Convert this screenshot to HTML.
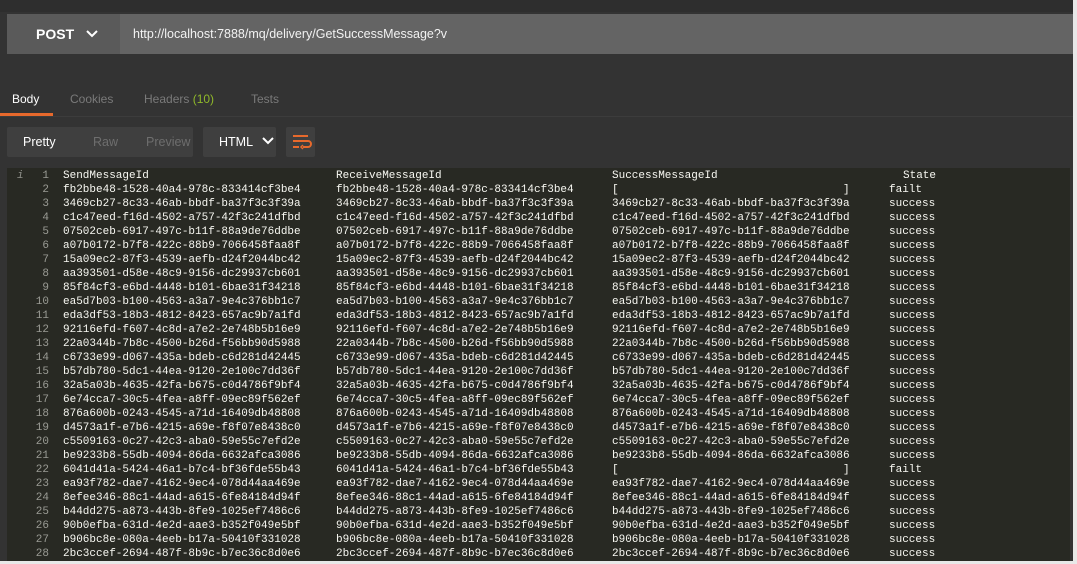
<!DOCTYPE html>
<html><head><meta charset="utf-8"><style>
*{margin:0;padding:0;box-sizing:border-box}
body{width:1077px;height:564px;overflow:hidden;background:#e8e8e8;font-family:"Liberation Sans",sans-serif;position:relative}
#app{position:absolute;left:0;top:0;width:1073px;height:561px;background:#333333}
.top{position:absolute;left:0;top:0;width:1073px;height:12px;background:#2e2e2e}
.bar{position:absolute;left:7px;top:14px;width:1066px;height:40px;background:#646464}
.method{position:absolute;left:7px;top:14px;width:113px;height:40px;background:#5a5a5a;color:#fff;font-weight:bold;font-size:14px;line-height:40px;padding-left:29px}
.url{position:absolute;left:133px;top:14px;line-height:40px;color:#f2f2f2;font-size:12.5px}
.tabs span{position:absolute;top:92px;font-size:12px;color:#7a7a7a}
.ul{position:absolute;left:0;top:113px;width:53px;height:3px;background:#e7692c}
.sep{position:absolute;left:0;top:116px;width:1073px;height:1px;background:#3c3c3c}
.btn{position:absolute;top:127px;height:30px;background:#3f3f3f;border-radius:2px;font-size:12.5px;line-height:30px}
.code{position:absolute;left:7px;top:168px;width:1063px;height:393px;background:#282923}
.r{position:absolute;height:14px;left:0;width:1063px;font-family:"Liberation Mono",monospace;font-size:11px;line-height:14px;color:#f8f8f2;white-space:pre}
.r b{font-weight:normal;position:absolute;top:0}
.r .n{color:#9a9b94;right:1021px;text-align:right}
.c1{left:56px}.c2{left:329px}.c3{left:605px}.c4{left:882px}
</style></head><body><div id="app">
<div class="top"></div>
<div class="bar"></div>
<div class="method">POST <svg width="12" height="8" style="margin-left:8px;vertical-align:1px" viewBox="0 0 12 8"><path d="M1 1l5 5 5-5" stroke="#fff" stroke-width="2" fill="none"/></svg></div>
<div class="url">http://localhost:7888/mq/delivery/GetSuccessMessage?v</div>
<div class="tabs"><span style="left:12px;color:#fff">Body</span><span style="left:70px">Cookies</span><span style="left:144px">Headers <i style="font-style:normal;color:#8fb82a">(10)</i></span><span style="left:251px">Tests</span></div>
<div class="ul"></div><div class="sep"></div>
<div class="btn" style="left:7px;width:186px"><span style="position:absolute;left:16px;color:#fff">Pretty</span><span style="position:absolute;left:86px;color:#6e6e6e">Raw</span><span style="position:absolute;left:139px;color:#6e6e6e">Preview</span></div>
<div class="btn" style="left:203px;width:73px;color:#fff;padding-left:16px">HTML <svg width="12" height="8" style="margin-left:6px;vertical-align:1px" viewBox="0 0 12 8"><path d="M1 1l5 5 5-5" stroke="#fff" stroke-width="2" fill="none"/></svg></div>
<div class="btn" style="left:286px;width:29px"><svg width="29" height="30" viewBox="0 0 29 30"><path d="M7 9h15M7 14h15a3 3 0 0 1 0 6h-5M7 20h6" stroke="#e7692c" stroke-width="2" fill="none"/><path d="M17 18l-2 2 2 2" stroke="#e7692c" stroke-width="1.5" fill="none"/></svg></div>
<div class="code">
<div class="r" style="top:1px"><b style="left:10px;color:#8f908a;font-style:italic">i</b><b class="n">1</b><b class="c1">SendMessageId</b><b class="c2">ReceiveMessageId</b><b class="c3">SuccessMessageId</b><b style="left:896px">State</b></div>
<div class="r" style="top:15px"><b class="n">2</b><b class="c1">fb2bbe48-1528-40a4-978c-833414cf3be4</b><b class="c2">fb2bbe48-1528-40a4-978c-833414cf3be4</b><b class="c3">[                                  ]</b><b class="c4">failt</b></div>
<div class="r" style="top:29px"><b class="n">3</b><b class="c1">3469cb27-8c33-46ab-bbdf-ba37f3c3f39a</b><b class="c2">3469cb27-8c33-46ab-bbdf-ba37f3c3f39a</b><b class="c3">3469cb27-8c33-46ab-bbdf-ba37f3c3f39a</b><b class="c4">success</b></div>
<div class="r" style="top:43px"><b class="n">4</b><b class="c1">c1c47eed-f16d-4502-a757-42f3c241dfbd</b><b class="c2">c1c47eed-f16d-4502-a757-42f3c241dfbd</b><b class="c3">c1c47eed-f16d-4502-a757-42f3c241dfbd</b><b class="c4">success</b></div>
<div class="r" style="top:57px"><b class="n">5</b><b class="c1">07502ceb-6917-497c-b11f-88a9de76ddbe</b><b class="c2">07502ceb-6917-497c-b11f-88a9de76ddbe</b><b class="c3">07502ceb-6917-497c-b11f-88a9de76ddbe</b><b class="c4">success</b></div>
<div class="r" style="top:71px"><b class="n">6</b><b class="c1">a07b0172-b7f8-422c-88b9-7066458faa8f</b><b class="c2">a07b0172-b7f8-422c-88b9-7066458faa8f</b><b class="c3">a07b0172-b7f8-422c-88b9-7066458faa8f</b><b class="c4">success</b></div>
<div class="r" style="top:85px"><b class="n">7</b><b class="c1">15a09ec2-87f3-4539-aefb-d24f2044bc42</b><b class="c2">15a09ec2-87f3-4539-aefb-d24f2044bc42</b><b class="c3">15a09ec2-87f3-4539-aefb-d24f2044bc42</b><b class="c4">success</b></div>
<div class="r" style="top:99px"><b class="n">8</b><b class="c1">aa393501-d58e-48c9-9156-dc29937cb601</b><b class="c2">aa393501-d58e-48c9-9156-dc29937cb601</b><b class="c3">aa393501-d58e-48c9-9156-dc29937cb601</b><b class="c4">success</b></div>
<div class="r" style="top:113px"><b class="n">9</b><b class="c1">85f84cf3-e6bd-4448-b101-6bae31f34218</b><b class="c2">85f84cf3-e6bd-4448-b101-6bae31f34218</b><b class="c3">85f84cf3-e6bd-4448-b101-6bae31f34218</b><b class="c4">success</b></div>
<div class="r" style="top:127px"><b class="n">10</b><b class="c1">ea5d7b03-b100-4563-a3a7-9e4c376bb1c7</b><b class="c2">ea5d7b03-b100-4563-a3a7-9e4c376bb1c7</b><b class="c3">ea5d7b03-b100-4563-a3a7-9e4c376bb1c7</b><b class="c4">success</b></div>
<div class="r" style="top:141px"><b class="n">11</b><b class="c1">eda3df53-18b3-4812-8423-657ac9b7a1fd</b><b class="c2">eda3df53-18b3-4812-8423-657ac9b7a1fd</b><b class="c3">eda3df53-18b3-4812-8423-657ac9b7a1fd</b><b class="c4">success</b></div>
<div class="r" style="top:155px"><b class="n">12</b><b class="c1">92116efd-f607-4c8d-a7e2-2e748b5b16e9</b><b class="c2">92116efd-f607-4c8d-a7e2-2e748b5b16e9</b><b class="c3">92116efd-f607-4c8d-a7e2-2e748b5b16e9</b><b class="c4">success</b></div>
<div class="r" style="top:169px"><b class="n">13</b><b class="c1">22a0344b-7b8c-4500-b26d-f56bb90d5988</b><b class="c2">22a0344b-7b8c-4500-b26d-f56bb90d5988</b><b class="c3">22a0344b-7b8c-4500-b26d-f56bb90d5988</b><b class="c4">success</b></div>
<div class="r" style="top:183px"><b class="n">14</b><b class="c1">c6733e99-d067-435a-bdeb-c6d281d42445</b><b class="c2">c6733e99-d067-435a-bdeb-c6d281d42445</b><b class="c3">c6733e99-d067-435a-bdeb-c6d281d42445</b><b class="c4">success</b></div>
<div class="r" style="top:197px"><b class="n">15</b><b class="c1">b57db780-5dc1-44ea-9120-2e100c7dd36f</b><b class="c2">b57db780-5dc1-44ea-9120-2e100c7dd36f</b><b class="c3">b57db780-5dc1-44ea-9120-2e100c7dd36f</b><b class="c4">success</b></div>
<div class="r" style="top:211px"><b class="n">16</b><b class="c1">32a5a03b-4635-42fa-b675-c0d4786f9bf4</b><b class="c2">32a5a03b-4635-42fa-b675-c0d4786f9bf4</b><b class="c3">32a5a03b-4635-42fa-b675-c0d4786f9bf4</b><b class="c4">success</b></div>
<div class="r" style="top:225px"><b class="n">17</b><b class="c1">6e74cca7-30c5-4fea-a8ff-09ec89f562ef</b><b class="c2">6e74cca7-30c5-4fea-a8ff-09ec89f562ef</b><b class="c3">6e74cca7-30c5-4fea-a8ff-09ec89f562ef</b><b class="c4">success</b></div>
<div class="r" style="top:239px"><b class="n">18</b><b class="c1">876a600b-0243-4545-a71d-16409db48808</b><b class="c2">876a600b-0243-4545-a71d-16409db48808</b><b class="c3">876a600b-0243-4545-a71d-16409db48808</b><b class="c4">success</b></div>
<div class="r" style="top:253px"><b class="n">19</b><b class="c1">d4573a1f-e7b6-4215-a69e-f8f07e8438c0</b><b class="c2">d4573a1f-e7b6-4215-a69e-f8f07e8438c0</b><b class="c3">d4573a1f-e7b6-4215-a69e-f8f07e8438c0</b><b class="c4">success</b></div>
<div class="r" style="top:267px"><b class="n">20</b><b class="c1">c5509163-0c27-42c3-aba0-59e55c7efd2e</b><b class="c2">c5509163-0c27-42c3-aba0-59e55c7efd2e</b><b class="c3">c5509163-0c27-42c3-aba0-59e55c7efd2e</b><b class="c4">success</b></div>
<div class="r" style="top:281px"><b class="n">21</b><b class="c1">be9233b8-55db-4094-86da-6632afca3086</b><b class="c2">be9233b8-55db-4094-86da-6632afca3086</b><b class="c3">be9233b8-55db-4094-86da-6632afca3086</b><b class="c4">success</b></div>
<div class="r" style="top:295px"><b class="n">22</b><b class="c1">6041d41a-5424-46a1-b7c4-bf36fde55b43</b><b class="c2">6041d41a-5424-46a1-b7c4-bf36fde55b43</b><b class="c3">[                                  ]</b><b class="c4">failt</b></div>
<div class="r" style="top:309px"><b class="n">23</b><b class="c1">ea93f782-dae7-4162-9ec4-078d44aa469e</b><b class="c2">ea93f782-dae7-4162-9ec4-078d44aa469e</b><b class="c3">ea93f782-dae7-4162-9ec4-078d44aa469e</b><b class="c4">success</b></div>
<div class="r" style="top:323px"><b class="n">24</b><b class="c1">8efee346-88c1-44ad-a615-6fe84184d94f</b><b class="c2">8efee346-88c1-44ad-a615-6fe84184d94f</b><b class="c3">8efee346-88c1-44ad-a615-6fe84184d94f</b><b class="c4">success</b></div>
<div class="r" style="top:337px"><b class="n">25</b><b class="c1">b44dd275-a873-443b-8fe9-1025ef7486c6</b><b class="c2">b44dd275-a873-443b-8fe9-1025ef7486c6</b><b class="c3">b44dd275-a873-443b-8fe9-1025ef7486c6</b><b class="c4">success</b></div>
<div class="r" style="top:351px"><b class="n">26</b><b class="c1">90b0efba-631d-4e2d-aae3-b352f049e5bf</b><b class="c2">90b0efba-631d-4e2d-aae3-b352f049e5bf</b><b class="c3">90b0efba-631d-4e2d-aae3-b352f049e5bf</b><b class="c4">success</b></div>
<div class="r" style="top:365px"><b class="n">27</b><b class="c1">b906bc8e-080a-4eeb-b17a-50410f331028</b><b class="c2">b906bc8e-080a-4eeb-b17a-50410f331028</b><b class="c3">b906bc8e-080a-4eeb-b17a-50410f331028</b><b class="c4">success</b></div>
<div class="r" style="top:379px"><b class="n">28</b><b class="c1">2bc3ccef-2694-487f-8b9c-b7ec36c8d0e6</b><b class="c2">2bc3ccef-2694-487f-8b9c-b7ec36c8d0e6</b><b class="c3">2bc3ccef-2694-487f-8b9c-b7ec36c8d0e6</b><b class="c4">success</b></div>
</div>
</div></body></html>
